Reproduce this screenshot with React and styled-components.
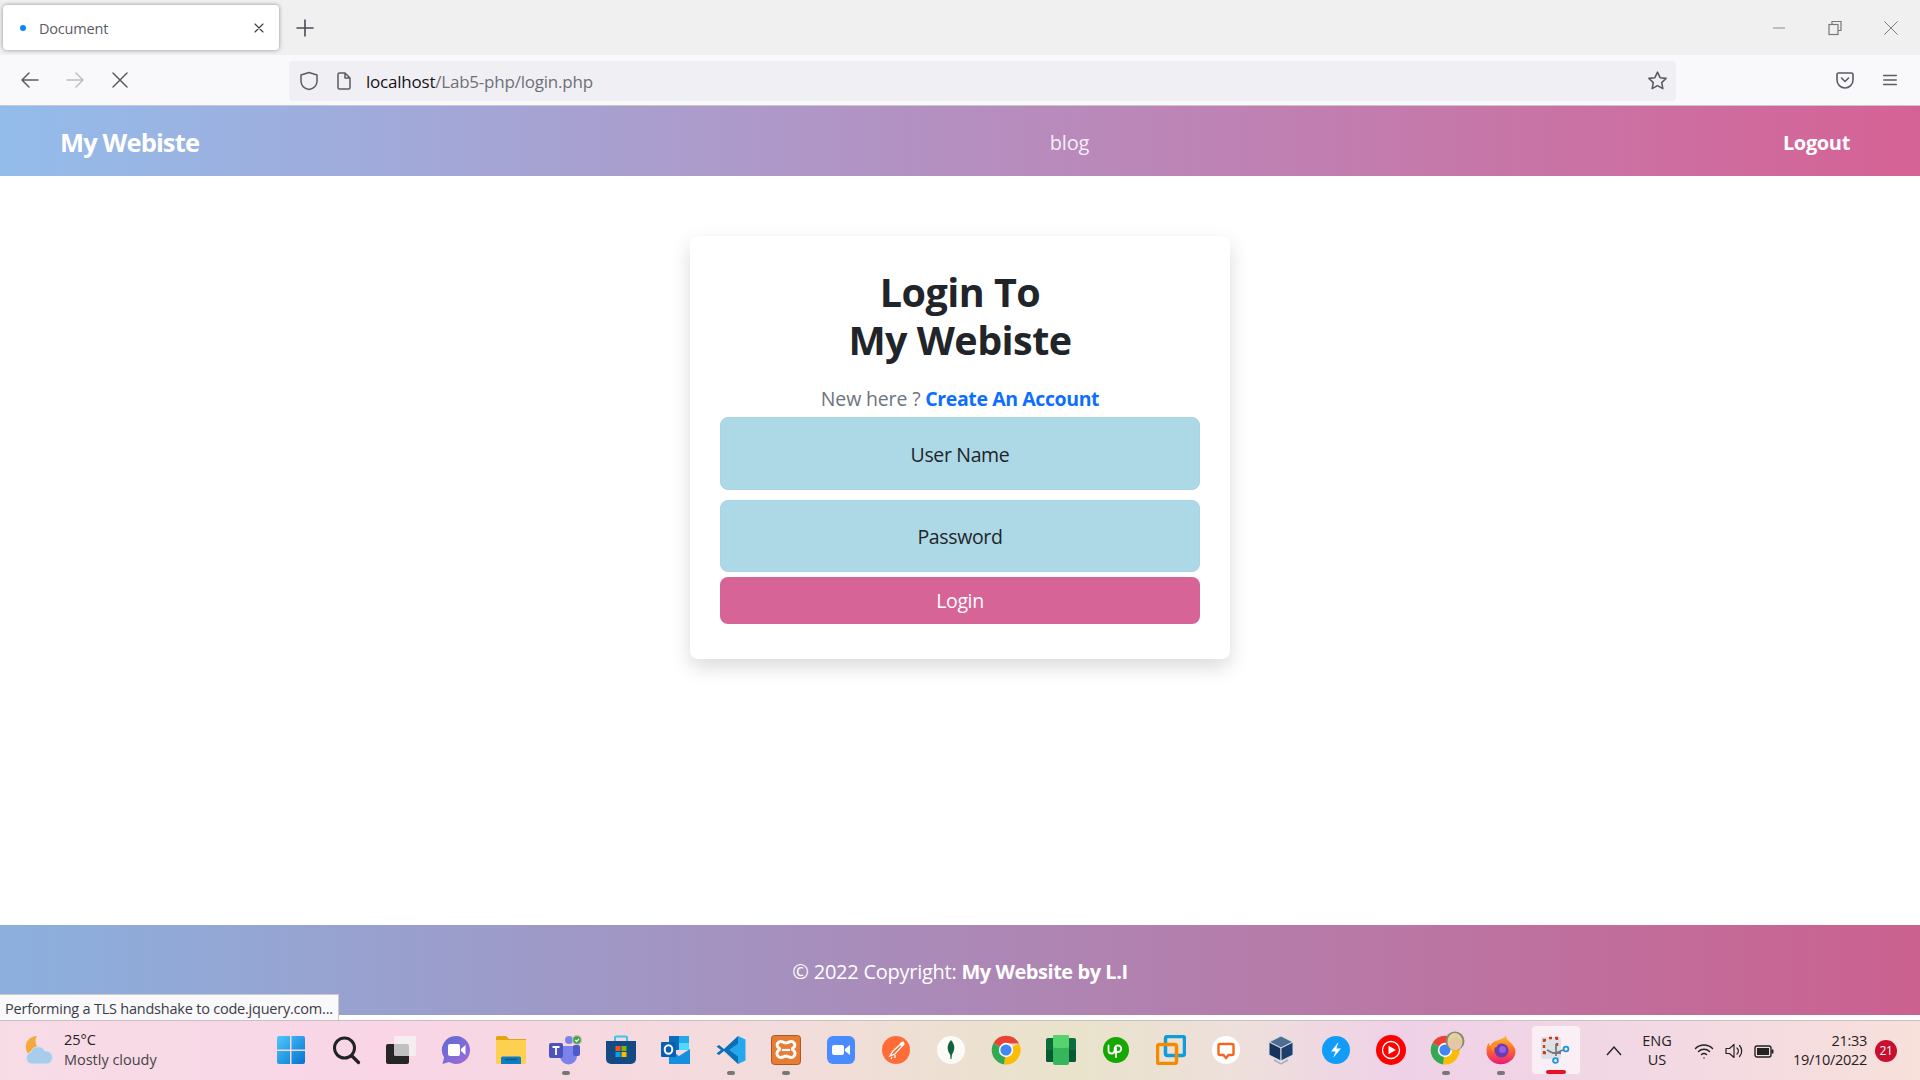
import React from "react";
import styled, { createGlobalStyle } from "styled-components";

const FONT = `"Open Sans", "Noto Sans", "Liberation Sans", sans-serif`;

const Global = createGlobalStyle`
  html, body { margin: 0; padding: 0; background: #fff; }
  * { box-sizing: border-box; }
  body { font-family: ${FONT}; color: #212529; overflow: hidden; }
`;

const Page = styled.div`
  position: relative;
  width: 1920px;
  height: 1080px;
  display: flex;
  flex-direction: column;
  overflow: hidden;
  background: #fff;
`;

/* Browser chrome */
const TabStrip = styled.div`
  height: 55px;
  flex: none;
  background: #f0f0f0;
  display: flex;
  align-items: flex-start;
  padding: 5px 0 0 3px;
`;
const Tab = styled.div`
  width: 276px;
  height: 45px;
  background: #fff;
  border-radius: 4px;
  box-shadow: 0 0 4px rgba(0, 0, 0, 0.4);
  display: flex;
  align-items: center;
  padding: 0 12px 0 17px;
`;
const TabDot = styled.span`
  width: 6px;
  height: 6px;
  border-radius: 50%;
  background: #0a84ff;
  margin-right: 13px;
`;
const TabTitle = styled.span`
  flex: 1;
  font-size: 14.5px;
  letter-spacing: -0.2px;
  color: #5b5b66;
  padding-top: 1px;
`;
const NewTab = styled.div`
  margin: 0 0 0 16px;
  height: 45px;
  display: flex;
  align-items: center;
`;
const WindowControls = styled.div`
  margin-left: auto;
  height: 45px;
  display: flex;
  align-items: center;
  gap: 41px;
  padding-right: 21px;
`;
const Toolbar = styled.div`
  height: 51px;
  flex: none;
  background: #f9f9fb;
  border-bottom: 1px solid #c8c8cc;
  display: flex;
  align-items: center;
  padding: 0 20px 0 20px;
`;
const NavButtons = styled.div`
  display: flex;
  align-items: center;
  gap: 25px;
  width: 269px;
`;
const AddressBar = styled.div`
  width: 1387px;
  height: 40px;
  margin-top: 1px;
  border-radius: 4px;
  background: #f0f0f4;
  display: flex;
  align-items: center;
  padding: 0 8px 0 10px;
`;
const AddressIcons = styled.div`
  display: flex;
  align-items: center;
  gap: 15px;
  margin-right: 12px;
`;
const Url = styled.div`
  flex: 1;
  font-size: 17px;
  letter-spacing: -0.22px;
  color: #6f6f78;
  padding-top: 1px;
  b { font-weight: 400; color: #15141a; }
`;
const ToolbarEnd = styled.div`
  margin-left: auto;
  display: flex;
  align-items: center;
  gap: 26px;
  padding-right: 1px;
`;

/* Site */
const NavBar = styled.nav`
  height: 70px;
  flex: none;
  display: flex;
  align-items: center;
  padding: 1px 70px 0 60px;
  background: linear-gradient(90deg, #93bceb 0%, #d66295 100%);
  color: #fff;
`;
const Brand = styled.a`
  font-size: 25.5px;
  font-weight: 700;
  letter-spacing: -0.85px;
  width: 138px;
  white-space: nowrap;
`;
const NavLinks = styled.div`
  flex: 1;
  text-align: center;
  padding: 2px 0 0 158px;
`;
const NavLink = styled.a`
  font-size: 20px;
  letter-spacing: -0.2px;
  color: rgba(255, 255, 255, 0.88);
`;
const Logout = styled.a`
  font-size: 20px;
  font-weight: 700;
  letter-spacing: -0.35px;
  padding-top: 2px;
`;
const Main = styled.main`
  flex: 1;
  display: flex;
  justify-content: center;
  align-items: flex-start;
  padding-top: 60px;
`;
const Card = styled.form`
  width: 540px;
  height: 423px;
  background: #fff;
  border-radius: 8px;
  box-shadow: 0 8px 20px rgba(0, 0, 0, 0.15);
  padding: 32px 30px 0;
  display: flex;
  flex-direction: column;
  align-items: stretch;
`;
const Title = styled.h1`
  margin: 0;
  font-size: 39.5px;
  line-height: 48px;
  font-weight: 700;
  letter-spacing: -0.55px;
  text-align: center;
  color: #212529;
`;
const Hint = styled.p`
  margin: 22px 0 5px;
  height: 26px;
  line-height: 26px;
  font-size: 19.5px;
  letter-spacing: -0.15px;
  text-align: center;
  color: #6c757d;
  a { color: #0d6efd; font-weight: 700; letter-spacing: -0.4px; }
`;
const Field = styled.input`
  width: 100%;
  height: ${(p) => p.$h}px;
  margin-bottom: ${(p) => p.$mb}px;
  border: 1px solid #a9d4e2;
  border-radius: 8px;
  background: #add8e6;
  text-align: center;
  font-family: ${FONT};
  font-size: 19.5px;
  letter-spacing: -0.35px;
  padding: ${(p) => p.$pt}px 0 0;
  outline: none;
  &::placeholder { color: #212529; opacity: 1; }
`;
const Submit = styled.button`
  width: 100%;
  height: 47px;
  border: 0;
  border-radius: 8px;
  background: #d76496;
  color: #fff;
  font-family: ${FONT};
  font-size: 19.5px;
  letter-spacing: -0.35px;
  padding: 0;
`;
const Footer = styled.footer`
  height: 90px;
  flex: none;
  display: flex;
  align-items: center;
  justify-content: center;
  background: linear-gradient(90deg, #8cb0de 0%, #cb618f 100%);
  color: #fff;
  font-size: 20px;
  letter-spacing: -0.25px;
  padding-top: 3px;
  b { font-weight: 700; letter-spacing: -0.45px; }
`;
const WhiteGap = styled.div`
  height: 5px;
  flex: none;
  background: #fff;
`;
const Status = styled.div`
  position: absolute;
  left: 0;
  bottom: 60px;
  width: 339px;
  height: 26px;
  background: #f9f9fb;
  border-top: 1px solid #ccc;
  border-right: 1px solid #ccc;
  font-size: 14.5px;
  line-height: 27px;
  letter-spacing: -0.22px;
  padding-left: 5px;
  color: #3c3c44;
  white-space: nowrap;
`;

/* Taskbar */
const Taskbar = styled.div`
  height: 60px;
  flex: none;
  display: flex;
  align-items: center;
  border-top: 1px solid #c9bfc5;
  background: linear-gradient(90deg, #f7dce6 0%, #f9d5e6 20%, #f3dcdc 40%, #e9e3cb 56%, #eedfdc 65%, #efd1e7 73%, #f2d8e4 85%, #f8e0db 100%);
`;
const Weather = styled.div`
  width: 263px;
  flex: none;
  display: flex;
  align-items: center;
  padding-left: 24px;
  gap: 9px;
`;
const WeatherText = styled.div`
  font-size: 14.5px;
  line-height: 20px;
  letter-spacing: -0.02px;
  color: #444;
  margin-top: -2px;
  span { display: block; color: #222; }
`;
const Apps = styled.div`
  display: flex;
  flex: none;
`;
const AppSlot = styled.div`
  position: relative;
  width: 55px;
  height: 59px;
  display: flex;
  align-items: center;
  justify-content: center;
  padding-bottom: 2px;
`;
const ActiveTile = styled.div`
  position: absolute;
  left: 4px;
  top: 5px;
  width: 48px;
  height: 48px;
  border-radius: 4px;
  background: rgba(255, 255, 255, 0.6);
`;
const TileIcon = styled.span`
  position: relative;
  display: flex;
`;
const RunDot = styled.span`
  position: absolute;
  left: 24px;
  top: 50px;
  width: 8px;
  height: 4px;
  border-radius: 2px;
  background: #777;
`;
const ActiveBar = styled.span`
  position: absolute;
  left: 18px;
  top: 49px;
  width: 20px;
  height: 4px;
  border-radius: 2px;
  background: #e81123;
`;
const Tray = styled.div`
  flex: 1;
  display: flex;
  align-items: center;
  padding-right: 23px;
`;
const Lang = styled.div`
  width: 36px;
  margin: -2px 19px 0 17px;
  text-align: center;
  font-size: 14.5px;
  line-height: 19px;
  color: #222;
`;
const TrayIcons = styled.div`
  display: flex;
  align-items: center;
  gap: 10px;
`;
const Clock = styled.div`
  margin-left: auto;
  margin-top: -2px;
  text-align: right;
  font-size: 14.5px;
  line-height: 19px;
  letter-spacing: -0.3px;
  color: #222;
`;
const Badge = styled.div`
  width: 22px;
  height: 22px;
  margin-left: 8px;
  border-radius: 50%;
  background: #c8102e;
  color: #fff;
  font-size: 12px;
  text-align: center;
  line-height: 22px;
  letter-spacing: -0.3px;
`;
const Chevron = styled.svg`
  margin-left: 23px;
`;
const ChromeUserSvg = styled.svg`
  margin: -4px 0 0 5px;
`;

const Line = ({ d, size = 20, color = "#5b5b66", w = 1.5, vb = 20 }) => (
  <svg width={size} height={size} viewBox={`0 0 ${vb} ${vb}`} fill="none" stroke={color} strokeWidth={w} strokeLinecap="round" strokeLinejoin="round">
    <path d={d} />
  </svg>
);

const ChromeParts = () => (
  <>
    <path d="M15 15 L2.5 8 A14.5 14.5 0 0 1 28 8.5 L15 8.5Z" fill="#ea4335" />
    <path d="M15 15 L28 8.5 A14.5 14.5 0 0 1 13 29.4Z" fill="#fbbc04" />
    <path d="M15 15 L13 29.4 A14.5 14.5 0 0 1 2.5 8Z" fill="#34a853" />
    <circle cx="15" cy="15" r="7.2" fill="#fff" />
    <circle cx="15" cy="15" r="5.6" fill="#4285f4" />
  </>
);

const icons = {
  windows: (
    <svg width="30" height="30" viewBox="0 0 30 30">
      <defs>
        <linearGradient id="win" x1="0" y1="0" x2="1" y2="1"><stop offset="0" stopColor="#4fc8fb" /><stop offset="1" stopColor="#0273cf" /></linearGradient>
      </defs>
      <path d="M1 3a2 2 0 0 1 2-2h11v13.500H1zM15.500 1H27a2 2 0 0 1 2 2v11.500H15.500zM1 16h13v13H3a2 2 0 0 1-2-2zM15.500 16H29v11a2 2 0 0 1-2 2H15.500z" fill="url(#win)" />
    </svg>
  ),
  search: (
    <svg width="30" height="30" viewBox="0 0 30 30" fill="none" stroke="#222" strokeLinecap="round">
      <circle cx="13.500" cy="13" r="10" strokeWidth="3" />
      <path d="M21 21l6.500 6.500" strokeWidth="3.200" />
    </svg>
  ),
  taskview: (
    <svg width="30" height="30" viewBox="0 0 30 30">
      <rect x="0" y="9" width="23" height="20" rx="2" fill="#262626" />
      <rect x="8" y="1" width="22" height="20" rx="1.500" fill="#f4f4f4" fillOpacity="0.75" />
    </svg>
  ),
  meet: (
    <svg width="30" height="30" viewBox="0 0 30 30">
      <defs>
        <linearGradient id="meet" x1="0" y1="0" x2="1" y2="1"><stop offset="0" stopColor="#5c6ad6" /><stop offset="1" stopColor="#a06cd5" /></linearGradient>
      </defs>
      <path d="M15 1a14 14 0 1 1-7 26.100L1.500 29l1.600-6.500A14 14 0 0 1 15 1z" fill="url(#meet)" />
      <rect x="7" y="9" width="12" height="12" rx="2" fill="#fff" />
      <path d="M20 14l4.500-4v10L20 16z" fill="#fff" />
    </svg>
  ),
  folder: (
    <svg width="30" height="30" viewBox="0 0 30 30">
      <path d="M0 2.500A1.500 1.500 0 0 1 1.500 1H10l3 3h17v6H0z" fill="#e3a40f" />
      <rect x="0" y="5" width="30" height="24" rx="1" fill="#fdd04f" />
      <path d="M5 29v-6a1.500 1.500 0 0 1 1.500-1.500h17A1.500 1.500 0 0 1 25 23v6z" fill="#0f7cc4" />
      <path d="M9 24.500h12" stroke="#0a5a96" strokeWidth="1.500" />
    </svg>
  ),
  teams: (
    <svg width="34" height="30" viewBox="0 0 34 30">
      <circle cx="20" cy="5" r="4" fill="#7b83eb" />
      <path d="M11 11h17v10a8.500 8.500 0 0 1-17 0z" fill="#7b83eb" />
      <rect x="24" y="10" width="7" height="11" rx="2" fill="#5059c9" />
      <rect x="0" y="8" width="14" height="15" rx="2" fill="#4b53bc" />
      <path d="M3.500 12h7M7 12v8" stroke="#fff" strokeWidth="1.800" />
      <circle cx="28" cy="5" r="5" fill="#bfbfb5" />
      <circle cx="28" cy="5" r="3.800" fill="#3fa43f" />
      <path d="M26 5l1.500 1.500L30 4" stroke="#fff" strokeWidth="1.200" fill="none" />
    </svg>
  ),
  store: (
    <svg width="30" height="30" viewBox="0 0 30 30">
      <path d="M9 6V2.500a1 1 0 0 1 1-1h10a1 1 0 0 1 1 1V6" fill="none" stroke="#3cc4ee" strokeWidth="2" />
      <path d="M0 6h30v18a5 5 0 0 1-5 5H5a5 5 0 0 1-5-5z" fill="#134a84" />
      <rect x="9.500" y="11" width="5" height="5" fill="#f25022" />
      <rect x="15.500" y="11" width="5" height="5" fill="#7fba00" />
      <rect x="9.500" y="17" width="5" height="5" fill="#00a4ef" />
      <rect x="15.500" y="17" width="5" height="5" fill="#ffb900" />
    </svg>
  ),
  outlook: (
    <svg width="30" height="30" viewBox="0 0 30 30">
      <rect x="8" y="1" width="20" height="14" fill="#0f6cbd" />
      <rect x="18" y="1" width="10" height="7" fill="#28a8ea" />
      <rect x="18" y="8" width="10" height="7" fill="#50d9ff" />
      <path d="M8 14l10 7 11-7v15H8z" fill="#1490df" />
      <rect x="0" y="7" width="15" height="15" rx="1" fill="#0a5fb4" />
      <ellipse cx="7.500" cy="14.500" rx="3.800" ry="4.200" fill="none" stroke="#fff" strokeWidth="2" />
    </svg>
  ),
  vscode: (
    <svg width="30" height="30" viewBox="0 0 30 30">
      <path d="M22 1L8 14 3 10 .5 11.500 5 15 .5 18.500 3 20l5-4 14 13 2-6V7z" fill="#0b6fb6" />
      <path d="M22 1l7.500 3.500v21L22 29v-7.500L13 15l9-6.500z" fill="#25a7ef" />
    </svg>
  ),
  xampp: (
    <svg width="30" height="30" viewBox="0 0 30 30">
      <rect x="0.500" y="0.500" width="29" height="29" rx="3" fill="#ea7b33" stroke="#a65a25" strokeWidth="1" />
      <path d="M8 7c3-1.500 5 1 7 1s4-2.500 7-1c3 2 2 5 0 6 -1 .7-1 1.300 0 2 2.500 1.500 3 5 0 7-3 1.500-5-1-7-1s-4 2.500-7 1c-3-2-2.500-5.500 0-7 1-.7 1-1.300 0-2-2-1-3-4 0-6z" fill="none" stroke="#fff" strokeWidth="3" />
      <path d="M11 15h8" stroke="#fff" strokeWidth="2.200" />
    </svg>
  ),
  zoom: (
    <svg width="28" height="28" viewBox="0 0 28 28">
      <rect x="0" y="0" width="28" height="28" rx="6" fill="#4a8cff" />
      <rect x="5" y="9" width="12" height="10" rx="2" fill="#fff" />
      <path d="M18 13l5-4v10l-5-4z" fill="#fff" />
    </svg>
  ),
  postman: (
    <svg width="28" height="28" viewBox="0 0 28 28">
      <circle cx="14" cy="14" r="14" fill="#ff6c37" />
      <path d="M21 6L11 15l-3 5 5-2 9-10zM10 21l-1 2M13 19l0 3" stroke="#fff" strokeWidth="1.300" fill="none" />
      <circle cx="20" cy="8" r="2" fill="#fff" />
    </svg>
  ),
  mongo: (
    <svg width="28" height="28" viewBox="0 0 28 28">
      <circle cx="14" cy="14" r="14" fill="#fafaf6" />
      <path d="M14 4c4 4.500 4.500 9.500 .9 14.500l-.4 4.500h-1l-.4-4.500C9.500 13.500 10 8.500 14 4z" fill="#10623f" />
    </svg>
  ),
  chrome: (
    <svg width="30" height="30" viewBox="0 0 30 30"><ChromeParts /></svg>
  ),
  green: (
    <svg width="30" height="30" viewBox="0 0 30 30">
      <rect x="0" y="3" width="30" height="24" rx="2" fill="#0b6e3d" />
      <path d="M0 15h30v10a2 2 0 0 1-2 2H2a2 2 0 0 1-2-2z" fill="#075a31" />
      <rect x="7" y="0" width="16" height="30" rx="2" fill="#37b55b" />
      <rect x="7" y="0" width="16" height="13" rx="2" fill="#55d46e" />
    </svg>
  ),
  upwork: (
    <svg width="26" height="26" viewBox="0 0 26 26">
      <circle cx="13" cy="13" r="13" fill="#14a800" />
      <path d="M5.500 8.500v5a3 3 0 0 0 6 0c0-3 1-5 3.500-5a3 3 0 0 1 0 6.500c-2 0-2.500-1-3-2M13 11v9" fill="none" stroke="#fff" strokeWidth="1.800" strokeLinecap="round" />
    </svg>
  ),
  vmware: (
    <svg width="30" height="30" viewBox="0 0 30 30" fill="none">
      <rect x="9.500" y="1.500" width="19" height="19" rx="2" stroke="#0d9ddb" strokeWidth="3.500" />
      <rect x="1.500" y="9.500" width="19" height="19" rx="2" stroke="#f38b00" strokeWidth="3.500" />
    </svg>
  ),
  remote: (
    <svg width="28" height="28" viewBox="0 0 28 28">
      <circle cx="14" cy="14" r="14" fill="#fff" />
      <path d="M8 8h12a1.500 1.500 0 0 1 1.500 1.500v8a1.500 1.500 0 0 1-1.500 1.500h-3.500L14 22l-2.500-3H8a1.500 1.500 0 0 1-1.500-1.500v-8A1.500 1.500 0 0 1 8 8z" fill="none" stroke="#f4661f" strokeWidth="2.400" />
    </svg>
  ),
  vbox: (
    <svg width="28" height="30" viewBox="0 0 28 30">
      <path d="M14 1l12 6-12 6L2 7z" fill="#4f6c91" stroke="#d8dfe8" strokeWidth="1" />
      <path d="M2 7l12 6v13L2 20z" fill="#16335c" stroke="#d8dfe8" strokeWidth="1" />
      <path d="M26 7L14 13v13l12-6z" fill="#1e3e6b" stroke="#d8dfe8" strokeWidth="1" />
      <path d="M7 25l7 4 7-4" fill="none" stroke="#a9afb7" strokeWidth="1.500" />
    </svg>
  ),
  messenger: (
    <svg width="28" height="28" viewBox="0 0 28 28">
      <circle cx="14" cy="14" r="14" fill="#139cf5" />
      <path d="M16.500 6L9 15.500h4.500L11 22l8-9.500h-4.500z" fill="#fff" />
    </svg>
  ),
  ytmusic: (
    <svg width="30" height="30" viewBox="0 0 30 30">
      <circle cx="15" cy="15" r="15" fill="#ff0000" />
      <circle cx="15" cy="15" r="8.500" fill="none" stroke="#fff" strokeWidth="1.300" />
      <path d="M12.500 10.800L20 15l-7.500 4.200z" fill="#fff" />
    </svg>
  ),
  chromeUser: (
    <ChromeUserSvg width="36" height="34" viewBox="0 0 36 34">
      <g transform="translate(0 4)"><ChromeParts /></g>
      <circle cx="25" cy="10" r="9.500" fill="#8c8a68" />
      <ellipse cx="25" cy="11" rx="7.500" ry="8.500" fill="#e5c6a7" />
      <path d="M18 10c0-6 4-8 7-8s7 3 7 8c-3-1-4-4-5-4s-5 3-9 4z" fill="#e0d5a0" />
    </ChromeUserSvg>
  ),
  firefox: (
    <svg width="30" height="30" viewBox="0 0 30 30">
      <defs>
        <linearGradient id="ff" x1="0.500" y1="0" x2="0.500" y2="1"><stop offset="0" stopColor="#ffc02b" /><stop offset="0.5" stopColor="#ff6a2b" /><stop offset="1" stopColor="#e5197f" /></linearGradient>
      </defs>
      <path d="M20 0c0 4 2 5 5 8 3 3 4.500 6 4.500 8.500A14.500 13 0 0 1 .5 16c0-3 .5-6 2.500-8.500 0 2 .5 3 1.500 3.500C6 7 9 6 11 5.500 15 4 19 3 20 0z" fill="url(#ff)" />
      <circle cx="15.500" cy="15.500" r="7" fill="#6b3ab8" />
      <circle cx="16.500" cy="14.500" r="3.500" fill="#9a5be0" />
      <path d="M5 10c3-3 8-3 9-1-2 0-3 1-3 3-3 0-4 2-3 5-2-1-4-4-3-7z" fill="#ff8a1f" />
    </svg>
  ),
  snip: (
    <svg width="30" height="30" viewBox="0 0 30 30" fill="none">
      <rect x="0" y="2" width="20" height="22" rx="2" fill="#d7dde3" fillOpacity="0.8" />
      <path d="M3 7V5h2M8 3h3M14 3h2v2M16 8v3M3 10v3M3 16v2h2" stroke="#cf3a1c" strokeWidth="2.400" />
      <path d="M6 15l6 3 8 0M15 9v12" stroke="#7a7a7a" strokeWidth="1.800" />
      <path d="M15 18l7-3" stroke="#777" strokeWidth="1.800" />
      <circle cx="25" cy="14" r="2.400" stroke="#1898d5" strokeWidth="1.800" />
      <circle cx="14.500" cy="25.500" r="2.400" stroke="#1898d5" strokeWidth="1.800" />
    </svg>
  ),
};

const apps = [
  ["windows"], ["search"], ["taskview"], ["meet"], ["folder"], ["teams", true], ["store"], ["outlook"],
  ["vscode", true], ["xampp", true], ["zoom"], ["postman"], ["mongo"], ["chrome"], ["green"], ["upwork"],
  ["vmware"], ["remote"], ["vbox"], ["messenger"], ["ytmusic"], ["chromeUser", true], ["firefox", true],
];

export default function App() {
  return (
    <Page>
      <Global />
      <TabStrip>
        <Tab>
          <TabDot />
          <TabTitle>Document</TabTitle>
          <Line d="M5 5l10 10M15 5L5 15" size={16} color="#3b3b44" w={1.4} />
        </Tab>
        <NewTab><Line d="M10 2v16M2 10h16" size={20} color="#4b4b55" w={1.6} /></NewTab>
        <WindowControls>
          <Line d="M3 10h14" size={16} color="#888" w={1.2} />
          <svg width="14" height="16" viewBox="0 0 14 16" fill="none" stroke="#777" strokeWidth="1.200">
            <rect x="1" y="4.500" width="9" height="10" />
            <path d="M4 4.500V1.500h9v9h-3" />
          </svg>
          <Line d="M2 2l16 16M18 2L2 18" size={16} color="#777" w={1.2} />
        </WindowControls>
      </TabStrip>
      <Toolbar>
        <NavButtons>
          <Line d="M18 10H2M9 3l-7 7 7 7" size={20} color="#5b5b66" />
          <Line d="M2 10h16M11 3l7 7-7 7" size={20} color="#bdbdc2" />
          <Line d="M3 3l14 14M17 3L3 17" size={20} color="#5b5b66" />
        </NavButtons>
        <AddressBar>
          <AddressIcons>
            <Line d="M10 1.500l8 2.500v6c0 4.500-3.500 7.500-8 8.500-4.500-1-8-4-8-8.500V4z" size={20} color="#5b5b66" />
            <Line d="M4 3.500A1.500 1.500 0 0 1 5.500 2H11l5 5v9.500a1.500 1.500 0 0 1-1.500 1.500h-9A1.500 1.500 0 0 1 4 16.500zM11 2v5h5" size={20} color="#5b5b66" />
          </AddressIcons>
          <Url><b>localhost</b>/Lab5-php/login.php</Url>
          <Line d="M10 2l2.500 5.300 5.700.7-4.200 4 1.100 5.800-5.100-2.900-5.100 2.900L6 12 1.800 8l5.700-.7z" size={21} color="#5b5b66" />
        </AddressBar>
        <ToolbarEnd>
          <Line d="M3.500 3h13A1.500 1.500 0 0 1 18 4.500V10a8 8 0 0 1-16 0V4.500A1.500 1.500 0 0 1 3.500 3zM6.500 8l3.500 3.500L13.500 8" size={20} color="#5b5b66" w={1.6} />
          <Line d="M3 5h14M3 10h14M3 15h14" size={18} color="#5b5b66" w={1.6} />
        </ToolbarEnd>
      </Toolbar>

      <NavBar>
        <Brand>My Webiste</Brand>
        <NavLinks><NavLink>blog</NavLink></NavLinks>
        <Logout>Logout</Logout>
      </NavBar>
      <Main>
        <Card>
          <Title>Login To<br />My Webiste</Title>
          <Hint>New here ? <a>Create An Account</a></Hint>
          <Field $h={73} $mb={10} $pt={2} placeholder="User Name" />
          <Field $h={72} $mb={5} $pt={0} type="password" placeholder="Password" />
          <Submit type="button">Login</Submit>
        </Card>
      </Main>
      <Footer><span>© 2022 Copyright: <b>My Website by L.I</b></span></Footer>
      <WhiteGap />
      <Status>Performing a TLS handshake to code.jquery.com...</Status>

      <Taskbar>
        <Weather>
          <svg width="31" height="30" viewBox="0 0 31 30">
            <path d="M13 0a11 11 0 1 0 10 15A10 10 0 0 1 13 0z" fill="#f5a93c" />
            <path d="M8 28a6 6 0 0 1-1-11.800A7.500 7.500 0 0 1 21 15a6.500 6.500 0 0 1 2 13z" fill="#a8cdec" stroke="#d5e6f5" strokeWidth="1" />
          </svg>
          <WeatherText><span>25°C</span>Mostly cloudy</WeatherText>
        </Weather>
        <Apps>
          {apps.map(([name, running]) => (
            <AppSlot key={name}>
              {icons[name]}
              {running && <RunDot />}
            </AppSlot>
          ))}
          <AppSlot>
            <ActiveTile />
            <TileIcon>{icons.snip}</TileIcon>
            <ActiveBar />
          </AppSlot>
        </Apps>
        <Tray>
          <Chevron width="16" height="16" viewBox="0 0 16 16" fill="none" stroke="#222" strokeWidth="1.400"><path d="M1 12l7-8 7 8" /></Chevron>
          <Lang>ENG<br />US</Lang>
          <TrayIcons>
            <Line d="M1.500 7.500a12 12 0 0 1 17 0M4.500 10.500a8 8 0 0 1 11 0M7.500 13.500a4 4 0 0 1 5 0M10 17v.1" size={20} color="#222" w={1.5} />
            <Line d="M2 7.500h3.500L10 3.500v13l-4.500-4H2zM13 7a4 4 0 0 1 0 6M15.500 4.500a8 8 0 0 1 0 11" size={20} color="#222" w={1.2} />
            <svg width="20" height="20" viewBox="0 0 20 20"><rect x="1" y="5" width="16" height="11" rx="2" fill="none" stroke="#222" strokeWidth="1.400" /><rect x="3" y="7" width="12" height="7" fill="#222" /><rect x="17.500" y="8.500" width="2" height="4" fill="#222" /></svg>
          </TrayIcons>
          <Clock>21:33<br />19/10/2022</Clock>
          <Badge>21</Badge>
        </Tray>
      </Taskbar>
    </Page>
  );
}
